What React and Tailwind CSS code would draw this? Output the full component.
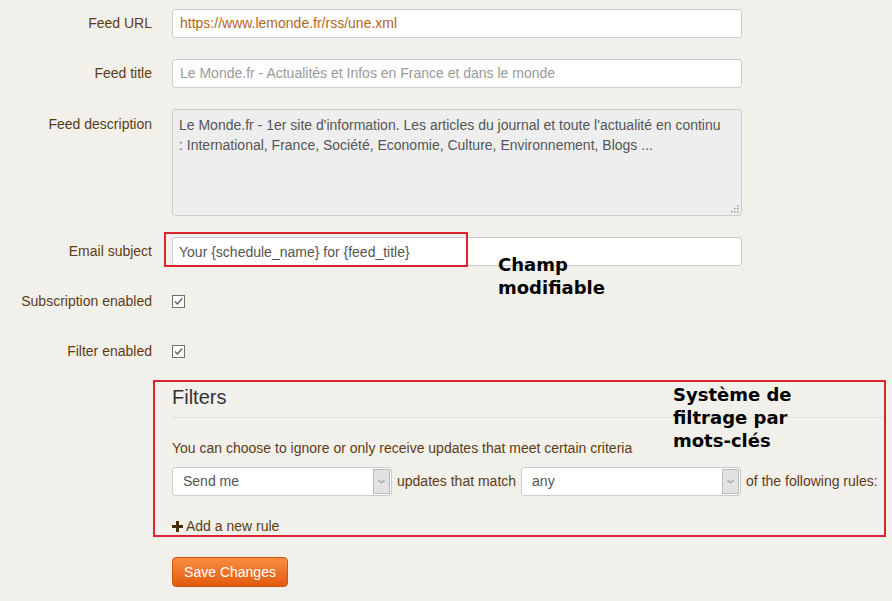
import { useState } from "react";

const Label = ({ children }) => (
  <div className="w-[152px] shrink-0 text-right text-[14px] text-[#5c3c14]">{children}</div>
);

const Checkbox = ({ checked }) => (
  <span className="flex h-[13px] w-[13px] items-center justify-center border border-[#707070] bg-white">
    {checked && (
      <svg width="9" height="9" viewBox="0 0 9 9">
        <path d="M1 4.5 L3.5 7 L8 1.5" fill="none" stroke="#555" strokeWidth="1.2" />
      </svg>
    )}
  </span>
);

const Select = ({ value, width }) => (
  <div className={`${width} relative flex h-[29px] items-center rounded-[3px] border border-[#ccc] bg-white pl-[10px] text-[14px] text-[#555]`}>
    {value}
    <span className="absolute right-[1px] top-[1px] flex h-[25px] w-[17px] items-center justify-center border border-[#bbb] bg-[#e2e2e2]">
      <svg width="7" height="5" viewBox="0 0 7 5">
        <path d="M0.5 1 L3.5 4 L6.5 1" fill="none" stroke="#777" strokeWidth="1" />
      </svg>
    </span>
  </div>
);

export default function App() {
  const [subject, setSubject] = useState("Your {schedule_name} for {feed_title}");

  return (
    <div className="relative h-[601px] w-[892px] overflow-hidden bg-[#f2f0eb] pt-[9px] font-['Liberation_Sans',Arial,sans-serif]">
      {/* Feed URL */}
      <div className="mb-[21px] flex items-center gap-[20px]">
        <Label>Feed URL</Label>
        <div className="flex h-[29px] w-[570px] items-center rounded-[3px] border border-[#ccc] bg-white px-[7px] text-[14px] text-[#b8641c]">
          https://www.lemonde.fr/rss/une.xml
        </div>
      </div>

      {/* Feed title */}
      <div className="mb-[21px] flex items-center gap-[20px]">
        <Label>Feed title</Label>
        <div className="flex h-[29px] w-[570px] items-center rounded-[3px] border border-[#ccc] bg-white px-[7px] text-[14px] text-[#999]">
          Le Monde.fr - Actualités et Infos en France et dans le monde
        </div>
      </div>

      {/* Feed description */}
      <div className="mb-[21px] flex items-start gap-[20px]">
        <div className="pt-[5px]">
          <Label>Feed description</Label>
        </div>
        <div className="relative h-[107px] w-[570px] rounded-[3px] border border-[#ccc] bg-[#eee] pl-[6px] pr-[20px] pt-[5px] text-[14px] leading-[20px] text-[#555]">
          Le Monde.fr - 1er site d'information. Les articles du journal et toute l'actualité en continu : International, France, Société, Economie, Culture, Environnement, Blogs ...
          <svg className="absolute bottom-[2px] right-[2px]" width="9" height="9" viewBox="0 0 9 9">
            <g fill="#999">
              <rect x="7" y="1" width="1.5" height="1.5" />
              <rect x="4" y="4" width="1.5" height="1.5" />
              <rect x="7" y="4" width="1.5" height="1.5" />
              <rect x="1" y="7" width="1.5" height="1.5" />
              <rect x="4" y="7" width="1.5" height="1.5" />
              <rect x="7" y="7" width="1.5" height="1.5" />
            </g>
          </svg>
        </div>
      </div>

      {/* Email subject */}
      <div className="mb-[21px] flex items-center gap-[20px]">
        <Label>Email subject</Label>
        <input
          value={subject}
          onChange={(e) => setSubject(e.target.value)}
          className="h-[29px] w-[570px] rounded-[3px] border border-[#ccc] bg-white px-[6px] text-[14px] text-[#555] outline-none"
        />
      </div>

      {/* Subscription enabled */}
      <div className="mb-[21px] flex h-[29px] items-center gap-[20px]">
        <Label>Subscription enabled</Label>
        <Checkbox checked />
      </div>

      {/* Filter enabled */}
      <div className="mb-[14px] flex h-[29px] items-center gap-[20px]">
        <Label>Filter enabled</Label>
        <Checkbox checked />
      </div>

      {/* Filters section */}
      <div className="ml-[153px] h-[157px] w-[733px] border-2 border-[#d9252e] pl-[17px]">
        <h3 className="pt-[1px] text-[20px] leading-[28px] text-[#333]">Filters</h3>
        <div className="mt-[6px] border-t border-[#e2dfd8]" />
        <p className="mt-[20px] text-[14px] leading-[20px] text-[#5c3c14]">
          You can choose to ignore or only receive updates that meet certain criteria
        </p>
        <div className="mt-[9px] flex items-center gap-[5px] text-[14px] text-[#5c3c14]">
          <Select value="Send me" width="w-[220px]" />
          <span>updates that match</span>
          <Select value="any" width="w-[220px]" />
          <span>of the following rules:</span>
        </div>
        <div className="mt-[22px] flex items-center gap-[3px] text-[14px] leading-[16px] text-[#5c3c14]">
          <svg width="11" height="11" viewBox="0 0 11 11">
            <path d="M4 0h3v4h4v3H7v4H4V7H0V4h4z" fill="#4a300d" />
          </svg>
          Add a new rule
        </div>
      </div>

      {/* Save */}
      <button className="ml-[172px] mt-[20px] h-[30px] w-[116px] rounded-[4px] border border-[#cf560c] bg-gradient-to-b from-[#f98d40] to-[#e25a08] text-[14px] text-white">
        Save Changes
      </button>

      {/* Annotations */}
      <div className="pointer-events-none absolute left-[164px] top-[232px] h-[35px] w-[304px] border-2 border-[#d9252e]" />
      <div className="absolute left-[498px] top-[253px] text-[18px] font-bold leading-[23px] text-black font-['DejaVu_Sans',Verdana,sans-serif]">
        Champ
        <br />
        modifiable
      </div>
      <div className="absolute left-[673px] top-[383px] text-[18px] font-bold leading-[23px] text-black font-['DejaVu_Sans',Verdana,sans-serif]">
        Système de
        <br />
        filtrage par
        <br />
        mots-clés
      </div>
    </div>
  );
}
